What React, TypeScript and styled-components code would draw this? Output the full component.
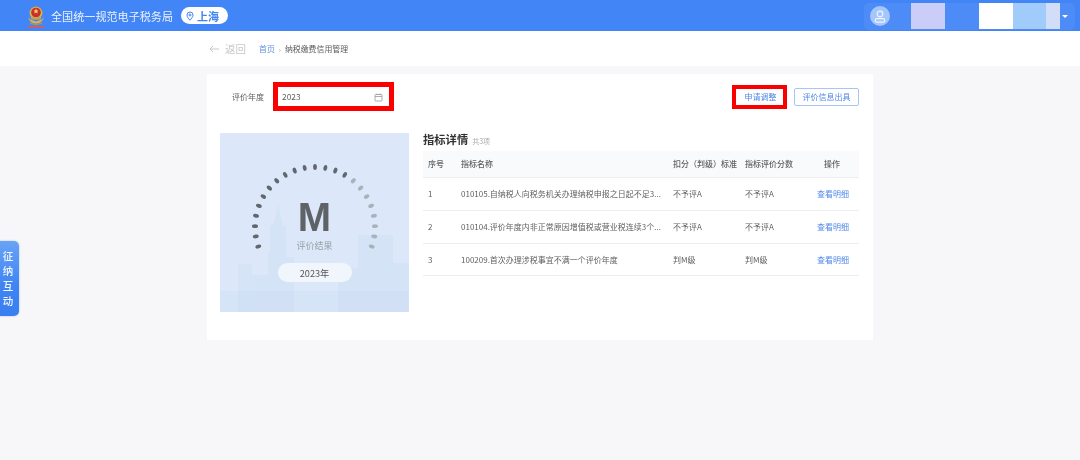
import React from "react";
import styled, { createGlobalStyle } from "styled-components";

const Global = createGlobalStyle`
  html, body { margin: 0; padding: 0; background: #f7f7f9; }
  body { font-family: "Noto Sans CJK SC", "Liberation Sans", sans-serif; }
  * { box-sizing: border-box; }
`;

const Page = styled.div`
  position: relative;
  width: 1080px;
  height: 460px;
  overflow: hidden;
  background: #f7f7f9;
  filter: blur(0.4px);
`;

const TopBar = styled.header`
  height: 31px;
  background: #4285f6;
  display: flex;
  align-items: center;
  padding: 0 5px 0 27px;
`;

const Brand = styled.span`
  margin-left: 6px;
  color: #eaf2ff;
  font-size: 11.1px;
  white-space: nowrap;
`;

const Region = styled.span`
  margin-left: 8px;
  width: 47px;
  height: 17px;
  border-radius: 9px;
  background: #fff;
  color: #4285f6;
  font-size: 11px;
  font-weight: 700;
  display: flex;
  align-items: center;
  gap: 3px;
  padding-left: 5px;
`;

const UserBox = styled.div`
  margin-left: auto;
  width: 211px;
  height: 27px;
  margin-top: 1px;
  border-radius: 5px;
  background: #4d8cf7;
  display: flex;
  align-items: center;
  padding-left: 6px;
`;

const Avatar = styled.span`
  width: 20px;
  height: 20px;
  border-radius: 50%;
  background: #a5c6fa;
  display: flex;
  align-items: center;
  justify-content: center;
`;

const Redaction = styled.span<{ $w: number; $c: string; $ml?: number }>`
  width: ${(p) => p.$w}px;
  height: 26px;
  background: ${(p) => p.$c};
  margin-left: ${(p) => p.$ml ?? 0}px;
`;

const Caret = styled.span`
  margin-left: 2px;
  border-left: 3px solid transparent;
  border-right: 3px solid transparent;
  border-top: 3px solid #fff;
`;

const SubBar = styled.nav`
  height: 35px;
  background: #fff;
  display: flex;
  align-items: center;
  padding-left: 209px;
`;

const Back = styled.span`
  display: flex;
  align-items: center;
  gap: 6px;
  color: #c8c8c8;
  font-size: 10.5px;
  margin-right: 13px;
`;

const Crumb = styled.span<{ $link?: boolean }>`
  font-size: 7.9px;
  color: ${(p) => (p.$link ? "#5b8fe0" : "#5c5c5c")};
`;

const CrumbSep = styled.span`
  font-size: 7px;
  color: #999;
  margin: 0 4px;
`;

const Card = styled.main`
  width: 666px;
  height: 266px;
  margin: 8px auto 0;
  background: #fff;
  padding: 8px 14px 0 13px;
`;

const Toolbar = styled.div`
  display: flex;
  align-items: center;
  height: 29px;
`;

const FilterLabel = styled.span`
  margin-left: 12px;
  width: 41px;
  font-size: 8px;
  color: #5f5f5f;
  white-space: nowrap;
`;

const DateField = styled.div`
  width: 121px;
  height: 29px;
  border: 5px solid #fa0000;
  background: #fff;
  display: flex;
  align-items: center;
  justify-content: space-between;
  padding: 0 6px 2px 4px;
  font-size: 8.4px;
  color: #5f5f5f;
`;

const Actions = styled.div`
  margin-left: auto;
  display: flex;
  align-items: center;
  gap: 7px;
`;

const HighlightButton = styled.button`
  width: 55px;
  height: 24px;
  border: 4px solid #fa0000;
  background: #fff;
  color: #4f87e8;
  font: inherit;
  font-size: 8px;
  padding: 0 0 0 2px;
`;

const OutlineButton = styled.button`
  width: 65px;
  height: 18px;
  border: 1px solid #a9c6f3;
  border-radius: 2px;
  background: #fff;
  color: #4f87e8;
  font: inherit;
  font-size: 8px;
  padding: 0;
`;

const Content = styled.section`
  display: flex;
  margin-top: 22px;
`;

const ResultPanel = styled.div`
  position: relative;
  flex: none;
  width: 189px;
  height: 179px;
  background: #dce8f9;
  overflow: hidden;
  display: flex;
  flex-direction: column;
  align-items: center;
  padding-top: 62px;
`;

const Backdrop = styled.svg`
  position: absolute;
  left: 0;
  top: 0;
`;

const Grade = styled.div`
  position: relative;
  font-family: "Liberation Sans", Arial, sans-serif;
  font-weight: 700;
  font-size: 40px;
  line-height: 44px;
  color: #5f6368;
`;

const ResultLabel = styled.div`
  position: relative;
  font-size: 9px;
  line-height: 13px;
  color: #9a9fa6;
`;

const YearPill = styled.div`
  position: relative;
  margin-top: 11px;
  width: 74px;
  height: 19px;
  border-radius: 10px;
  background: #f1f5fc;
  color: #555;
  font-size: 9.2px;
  display: flex;
  align-items: center;
  justify-content: center;
`;

const Details = styled.div`
  flex: 1;
  margin-left: 14px;
`;

const DetailTitle = styled.div`
  display: flex;
  align-items: baseline;
  gap: 4px;
  height: 18px;
`;

const TitleText = styled.span`
  font-size: 11.3px;
  font-weight: 700;
  line-height: 13px;
  color: #333;
`;

const TitleCount = styled.span`
  font-size: 7px;
  color: #aaa;
`;

const Row = styled.div<{ $head?: boolean; $h: number }>`
  display: grid;
  grid-template-columns: 32px 212px 72px 66px 54px;
  align-items: center;
  height: ${(p) => p.$h}px;
  padding-bottom: 1px;
  background: ${(p) => (p.$head ? "#f9fafc" : "#fff")};
  border-bottom: 1px solid #eceef2;
  font-size: 8px;
  font-weight: ${(p) => (p.$head ? 500 : 400)};
  color: #5f5f5f;
`;

const Cell = styled.span<{ $center?: boolean }>`
  padding-left: ${(p) => (p.$center ? 0 : 6)}px;
  text-align: ${(p) => (p.$center ? "center" : "left")};
  white-space: nowrap;
`;

const IndexCell = styled.span`
  padding-left: 5px;
`;

const DetailLink = styled.a`
  padding-left: 2px;
  text-align: center;
  color: #4f87e8;
`;

const SideTab = styled.div`
  position: absolute;
  left: 0;
  top: 241px;
  width: 19px;
  height: 75px;
  border-radius: 0 5px 5px 0;
  background: linear-gradient(180deg, #69a3f5 0%, #3f84f3 60%, #3a7ff0 100%);
  box-shadow: 0 0 2px rgba(66, 133, 246, 0.5);
  color: #f0f6ff;
  font-size: 10.5px;
  font-weight: 500;
  line-height: 15px;
  text-align: center;
  padding: 7px 3px 0 0;
`;

function Emblem() {
  return (
    <svg width="18" height="25" viewBox="0 0 18 25" style={{ flex: "none" }}>
      <path d="M1.500 14c0 4 3.500 6.500 7.500 6.500S16.500 18 16.500 14L15 16.500 9 18.500 3 16.500z" fill="#d9b25a" />
      <circle cx="9" cy="10" r="6.500" fill="#d8b04c" />
      <circle cx="9" cy="9.500" r="4.800" fill="#c9302c" />
      <path d="M4 14h10v2.500H4z" fill="#c9a24a" />
      <path d="M9 5.500l.9 2h1.600l-1.300 1.200.5 1.800L9 9.500l-1.700 1 .5-1.800-1.300-1.200h1.600z" fill="#f5d76a" />
      <path d="M3 19.500l6 1.500 6-1.500v1.500l-6 1.200-6-1.200z" fill="#b7953f" />
      <rect x="1" y="23" width="16" height="1.600" fill="#e05a52" />
    </svg>
  );
}

function Pin() {
  return (
    <svg width="8" height="10" viewBox="0 0 8 10" fill="none" stroke="#4285f6" strokeWidth="1">
      <path d="M4 9.200C2.300 7.400 1 6 1 4a3 3 0 0 1 6 0c0 2-1.300 3.400-3 5.200z" />
      <circle cx="4" cy="4" r="1" />
    </svg>
  );
}

function UserGlyph() {
  return (
    <svg width="12" height="13" viewBox="0 0 12 13" fill="none" stroke="#eef4ff" strokeWidth="1.200">
      <circle cx="6" cy="4" r="2.800" />
      <rect x="1.200" y="8.700" width="9.600" height="3.400" rx="1.700" />
    </svg>
  );
}

function ArrowLeft() {
  return (
    <svg width="10" height="8" viewBox="0 0 10 8" fill="none" stroke="#c8c8c8" strokeWidth="1">
      <path d="M10 4H1M4 1 1 4l3 3" />
    </svg>
  );
}

function CalendarGlyph() {
  return (
    <svg width="9" height="9" viewBox="0 0 9 9" fill="none" stroke="#999" strokeWidth="0.800" style={{ marginTop: 3 }}>
      <rect x="1" y="1.500" width="7" height="6.500" rx="0.500" />
      <path d="M1 3.500h7M3 .5v1.500M6 .5v1.500" />
    </svg>
  );
}

const CX = 95;
const CY = 94;
const TICKS = Array.from({ length: 23 }, (_, i) => {
  const deg = 199 - (i * 218) / 22;
  const rad = (deg * Math.PI) / 180;
  return { i, deg, x: CX + 60 * Math.cos(rad), y: CY - 60 * Math.sin(rad) };
});

function Skyline() {
  return (
    <Backdrop width="189" height="179" viewBox="0 0 189 179">
      <g fill="#c3d8f3" opacity="0.26">
        <path d="M18 179v-48h14v11h16v-22h2V92h3l3-12 2-10 2 10 3 12h3v32h8v55z" />
        <path d="M118 179v-44h20v-33h35v28h16v49z" />
      </g>
      <g fill="#c3d8f3" opacity="0.22">
        <rect x="0" y="158" width="189" height="21" />
      </g>
      {TICKS.map((t) => (
        <ellipse
          key={t.i}
          cx={t.x}
          cy={t.y}
          rx="3"
          ry="1.900"
          fill={t.i < 15 ? "#62676e" : "#a9b1bb"}
          transform={`rotate(${-t.deg} ${t.x} ${t.y})`}
        />
      ))}
    </Backdrop>
  );
}

const ROWS = [
  ["1", "010105.自纳税人向税务机关办理纳税申报之日起不足3...", "不予评A", "不予评A"],
  ["2", "010104.评价年度内非正常原因增值税或营业税连续3个...", "不予评A", "不予评A"],
  ["3", "100209.首次办理涉税事宜不满一个评价年度", "判M级", "判M级"],
];
const ROW_HEIGHTS = [33, 33, 32];

export default function App() {
  return (
    <>
      <Global />
      <Page>
        <TopBar>
          <Emblem />
          <Brand>全国统一规范电子税务局</Brand>
          <Region>
            <Pin />
            上海
          </Region>
          <UserBox>
            <Avatar>
              <UserGlyph />
            </Avatar>
            <Redaction $w={34} $c="#c9cdf8" $ml={21} />
            <Redaction $w={34} $c="#ffffff" $ml={34} />
            <Redaction $w={33} $c="#a0cbfb" />
            <Redaction $w={14} $c="#d2def8" />
            <Caret />
          </UserBox>
        </TopBar>
        <SubBar>
          <Back>
            <ArrowLeft />
            返回
          </Back>
          <Crumb $link>首页</Crumb>
          <CrumbSep>›</CrumbSep>
          <Crumb>纳税缴费信用管理</Crumb>
        </SubBar>
        <Card>
          <Toolbar>
            <FilterLabel>评价年度</FilterLabel>
            <DateField>
              2023
              <CalendarGlyph />
            </DateField>
            <Actions>
              <HighlightButton>申请调整</HighlightButton>
              <OutlineButton>评价信息出具</OutlineButton>
            </Actions>
          </Toolbar>
          <Content>
            <ResultPanel>
              <Skyline />
              <Grade>M</Grade>
              <ResultLabel>评价结果</ResultLabel>
              <YearPill>2023年</YearPill>
            </ResultPanel>
            <Details>
              <DetailTitle>
                <TitleText>指标详情</TitleText>
                <TitleCount>共3项</TitleCount>
              </DetailTitle>
              <Row $head $h={27}>
                <IndexCell>序号</IndexCell>
                <Cell>指标名称</Cell>
                <Cell>扣分（判级）标准</Cell>
                <Cell>指标评价分数</Cell>
                <Cell $center>操作</Cell>
              </Row>
              {ROWS.map((r, i) => (
                <Row key={r[0]} $h={ROW_HEIGHTS[i]}>
                  <IndexCell>{r[0]}</IndexCell>
                  <Cell>{r[1]}</Cell>
                  <Cell>{r[2]}</Cell>
                  <Cell>{r[3]}</Cell>
                  <DetailLink>查看明细</DetailLink>
                </Row>
              ))}
            </Details>
          </Content>
        </Card>
        <SideTab>
          征<br />纳<br />互<br />动
        </SideTab>
      </Page>
    </>
  );
}
